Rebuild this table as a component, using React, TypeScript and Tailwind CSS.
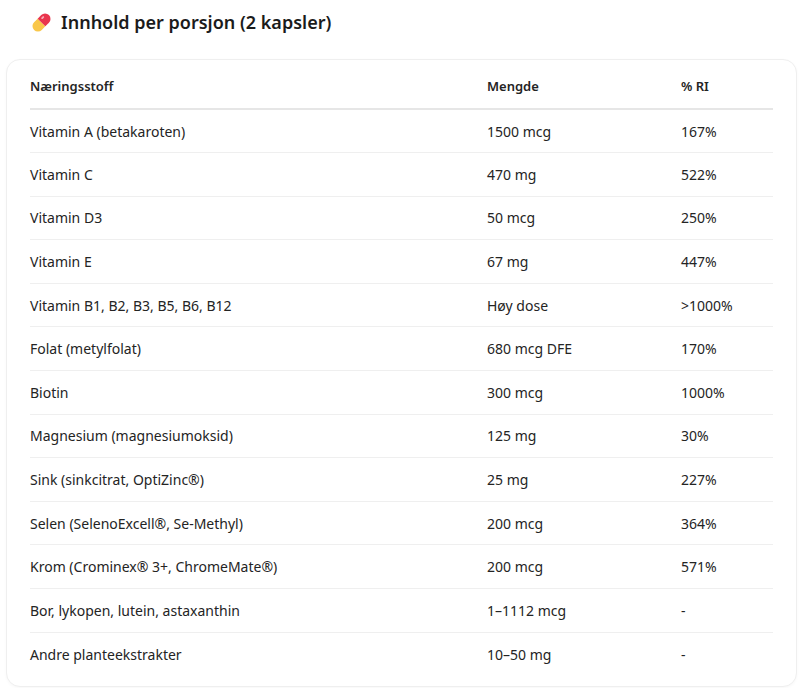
const ROWS: [string, string, string][] = [
  ['Vitamin A (betakaroten)', '1500 mcg', '167%'],
  ['Vitamin C', '470 mg', '522%'],
  ['Vitamin D3', '50 mcg', '250%'],
  ['Vitamin E', '67 mg', '447%'],
  ['Vitamin B1, B2, B3, B5, B6, B12', 'Høy dose', '>1000%'],
  ['Folat (metylfolat)', '680 mcg DFE', '170%'],
  ['Biotin', '300 mcg', '1000%'],
  ['Magnesium (magnesiumoksid)', '125 mg', '30%'],
  ['Sink (sinkcitrat, OptiZinc®)', '25 mg', '227%'],
  ['Selen (SelenoExcell®, Se-Methyl)', '200 mcg', '364%'],
  ['Krom (Crominex® 3+, ChromeMate®)', '200 mcg', '571%'],
  ['Bor, lykopen, lutein, astaxanthin', '1–1112 mcg', '-'],
  ['Andre planteekstrakter', '10–50 mg', '-'],
]

function PillIcon() {
  return (
    <svg width="21" height="21" viewBox="0 0 20 20" className="shrink-0">
      <g transform="rotate(-45 10 10)">
        <path d="M10 4.8 H5.2 a5.2 5.2 0 0 0 0 10.4 H10 Z" fill="#f9c74a" />
        <path d="M10 4.8 H14.8 a5.2 5.2 0 0 1 0 10.4 H10 Z" fill="#e9354d" />
        <rect x="12.5" y="6.6" width="3.2" height="1.8" rx="0.9" fill="#ffffff" opacity="0.6" />
      </g>
    </svg>
  )
}

export default function App() {
  return (
    <div className="min-h-[688px] bg-white pl-[6px] pr-[3px] pt-[9px] text-[#242424]" style={{ fontFamily: '"Noto Sans", "Open Sans", sans-serif' }}>
      {/* Heading */}
      <h2 className="flex items-center gap-[9px] pl-[25px] text-[18px] font-semibold leading-[26px] text-[#1b1b1b]">
        <PillIcon />
        Innhold per porsjon (2 kapsler)
      </h2>

      {/* Card */}
      <div className="mt-[24px] rounded-[14px] border border-[#efefef] bg-white px-[23px] pt-[5px] pb-[10px] shadow-[0_1px_3px_rgba(0,0,0,0.03)]">
        <table className="w-full border-collapse text-left text-[14px]">
          <thead>
            <tr className="border-b-2 border-[#e6e6e6]">
              <th className="h-[44px] w-[457px] text-[13px] font-semibold">Næringsstoff</th>
              <th className="h-[44px] w-[194px] text-[13px] font-semibold">Mengde</th>
              <th className="h-[44px] text-[13px] font-semibold">% RI</th>
            </tr>
          </thead>
          <tbody>
            {ROWS.map(([name, amount, ri], i) => (
              <tr key={name} className={i < ROWS.length - 1 ? 'border-b border-[#efefef]' : ''}>
                <td className="h-[43.6px]">{name}</td>
                <td className="h-[43.6px]">{amount}</td>
                <td className="h-[43.6px]">{ri}</td>
              </tr>
            ))}
          </tbody>
        </table>
      </div>
    </div>
  )
}
